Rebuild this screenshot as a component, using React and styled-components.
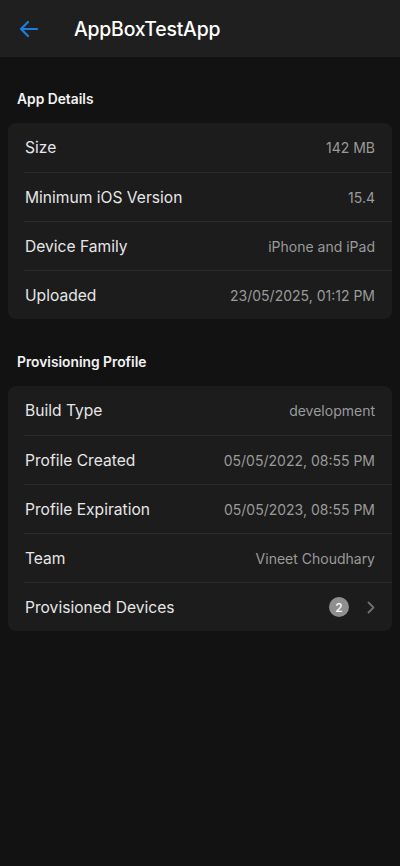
import React from "react";
import styled, { createGlobalStyle } from "styled-components";

const Global = createGlobalStyle`
  html, body { margin: 0; padding: 0; background: #121212; }
  body { font-family: Inter, "Noto Sans", "Liberation Sans", sans-serif; -webkit-font-smoothing: antialiased; }
  #root { min-height: 866px; background: #121212; }
`;

const Page = styled.div`
  width: 400px;
  min-height: 866px;
  background: #121212;
  display: flex;
  flex-direction: column;
`;

const Header = styled.header`
  height: 57px;
  background: #1f1f1f;
  display: flex;
  align-items: center;
  padding: 0 0 0 18px;
  gap: 34px;
  box-sizing: border-box;
`;

const BackButton = styled.button`
  background: none;
  border: none;
  padding: 0;
  width: 22px;
  height: 22px;
  display: flex;
  align-items: center;
  justify-content: center;
  color: #1b7ce0;
`;

const Title = styled.h1`
  margin: 0;
  font-size: 19.4px;
  font-weight: 500;
  color: #ffffff;
  letter-spacing: -0.2px;
`;

const Content = styled.main`
  padding: 32px 8px 0;
  display: flex;
  flex-direction: column;
  gap: 33px;
`;

const Section = styled.section`
  display: flex;
  flex-direction: column;
  gap: 14px;
`;

const SectionTitle = styled.h2`
  margin: 0;
  padding-left: 9px;
  font-size: 13.8px;
  line-height: 20px;
  font-weight: 600;
  color: #f2f2f2;
`;

const Card = styled.div`
  background: #1c1c1c;
  border-radius: 8px;
  overflow: hidden;
`;

const Row = styled.div`
  height: 49px;
  margin-left: 16px;
  padding-right: 17px;
  display: flex;
  align-items: center;
  justify-content: space-between;
  box-sizing: border-box;
  border-top: ${(p) => (p.$first ? "none" : "1px solid #2c2c2c")};
`;

const Label = styled.span`
  font-size: 15.6px;
  color: #e6e6e6;
  padding-left: 1px;
`;

const Value = styled.span`
  font-size: 14px;
  color: #9a9a9a;
`;

const Trailing = styled.div`
  display: flex;
  align-items: center;
  gap: 18px;
`;

const Badge = styled.span`
  width: 20px;
  height: 20px;
  border-radius: 50%;
  background: #8f8f8f;
  color: #fff;
  font-size: 12px;
  font-weight: 500;
  display: flex;
  align-items: center;
  justify-content: center;
`;

const appDetails = [
  ["Size", "142 MB"],
  ["Minimum iOS Version", "15.4"],
  ["Device Family", "iPhone and iPad"],
  ["Uploaded", "23/05/2025, 01:12 PM"],
];

const profile = [
  ["Build Type", "development"],
  ["Profile Created", "05/05/2022, 08:55 PM"],
  ["Profile Expiration", "05/05/2023, 08:55 PM"],
  ["Team", "Vineet Choudhary"],
];

export default function App() {
  return (
    <Page>
      <Global />
      <Header>
        <BackButton aria-label="Back">
          <svg width="20" height="18" viewBox="0 0 20 18" fill="none" stroke="currentColor" strokeWidth="2.2" strokeLinecap="round" strokeLinejoin="round">
            <path d="M18 9H2.5" />
            <path d="M9 2L2 9l7 7" />
          </svg>
        </BackButton>
        <Title>AppBoxTestApp</Title>
      </Header>
      <Content>
        <Section>
          <SectionTitle>App Details</SectionTitle>
          <Card>
            {appDetails.map(([l, v], i) => (
              <Row key={l} $first={i === 0}>
                <Label>{l}</Label>
                <Value>{v}</Value>
              </Row>
            ))}
          </Card>
        </Section>
        <Section>
          <SectionTitle>Provisioning Profile</SectionTitle>
          <Card>
            {profile.map(([l, v], i) => (
              <Row key={l} $first={i === 0}>
                <Label>{l}</Label>
                <Value>{v}</Value>
              </Row>
            ))}
            <Row>
              <Label>Provisioned Devices</Label>
              <Trailing>
                <Badge>2</Badge>
                <svg width="8" height="13" viewBox="0 0 8 13" fill="none" stroke="#6f6f6f" strokeWidth="1.8" strokeLinecap="round" strokeLinejoin="round">
                  <path d="M1.5 1.5l5 5-5 5" />
                </svg>
              </Trailing>
            </Row>
          </Card>
        </Section>
      </Content>
    </Page>
  );
}
